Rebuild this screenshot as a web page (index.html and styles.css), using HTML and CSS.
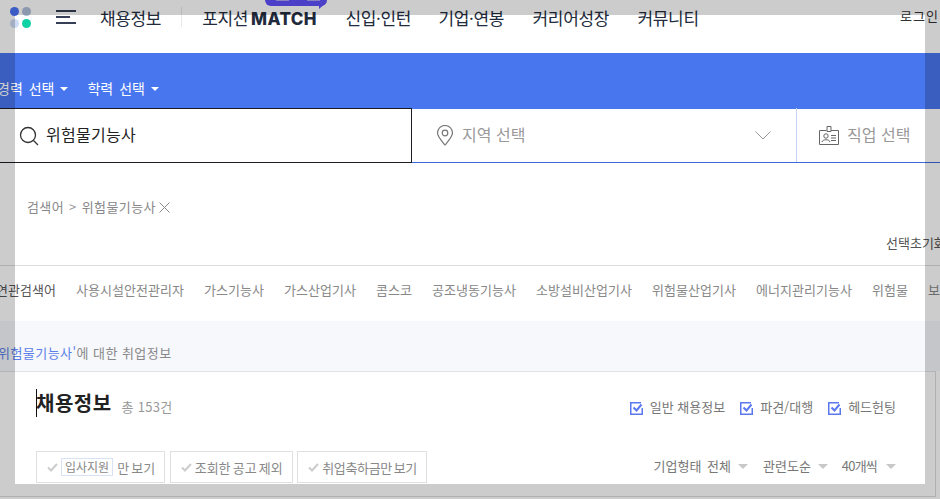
FILE: index.html
```html
<!DOCTYPE html>
<html lang="ko">
<head>
<meta charset="utf-8">
<title>채용정보</title>
<link rel="stylesheet" href="styles.css">
</head>
<body>
<div class="page">
  <header class="top">
    <svg class="logo" width="22" height="22" viewBox="0 0 22 22"><circle cx="4.500" cy="4.500" r="4.500" fill="#4a73f5"/><circle cx="16.500" cy="4.500" r="4.500" fill="#aebeda"/><circle cx="4.500" cy="16.500" r="4.500" fill="#cedbf6"/><circle cx="16.500" cy="16.500" r="4.500" fill="#0ed1a5"/></svg>
    <svg class="burger" width="20" height="14" viewBox="0 0 20 14"><path d="M0 1h20M0 7h14M0 13h20" stroke="#363f56" stroke-width="2" fill="none"/></svg>
    <nav class="nav">
      <a class="nav-first">채용정보</a>
      <span class="nav-sep"></span>
      <a class="nav-match">포지션<b>MATCH</b><span class="bubble"></span></a>
      <a class="nav-intern">신입·인턴</a>
      <a>기업·연봉</a>
      <a>커리어성장</a>
      <a>커뮤니티</a>
    </nav>
    <a class="login">로그인</a>
  </header>

  <section class="filters">
    <span class="filter">경력 선택<i class="caret"></i></span>
    <span class="filter">학력 선택<i class="caret"></i></span>
  </section>

  <section class="search">
    <div class="search-key">
      <svg width="20" height="20" viewBox="0 0 20 20"><circle cx="9" cy="9" r="7.500" fill="none" stroke="#333" stroke-width="1.300"/><path d="M14.500 14.500l4.500 4.500" stroke="#333" stroke-width="1.300"/></svg>
      <span class="key-text">위험물기능사</span>
    </div>
    <div class="search-area">
      <svg width="18" height="21" viewBox="0 0 18 21"><path d="M9 20C5 15 1.500 11.500 1.500 8a7.500 7.500 0 0 1 15 0c0 3.500-3.500 7-7.500 12z" fill="none" stroke="#777" stroke-width="1.200"/><circle cx="9" cy="8" r="2.800" fill="none" stroke="#777" stroke-width="1.200"/></svg>
      <span class="ph">지역 선택</span>
      <svg class="chev" width="16" height="9" viewBox="0 0 16 9"><path d="M.5.500L8 8l7.500-7.500" fill="none" stroke="#999" stroke-width="1"/></svg>
    </div>
    <div class="search-job">
      <svg width="20" height="19" viewBox="0 0 20 19"><path d="M7.500 4.500H.5v14h19v-14h-7.500M8 .5h4v5H8z" fill="none" stroke="#666"/><circle cx="7" cy="10" r="2.200" fill="none" stroke="#666"/><path d="M3 16c.3-3 7.700-3 8 0M12 9.500h5M12 12h5M12 14.500h5" fill="none" stroke="#666"/></svg>
      <span class="ph">직업 선택</span>
    </div>
  </section>

  <section class="crumbs">
    <div class="crumb-line"><span>검색어</span><span class="gt">&gt;</span><span>위험물기능사</span>
      <svg width="11" height="11" viewBox="0 0 11 11"><path d="M.5.500l10 10M10.500.5l-10 10" stroke="#888" stroke-width="1" fill="none"/></svg>
    </div>
    <div class="reset">선택초기화</div>
  </section>

  <section class="related">
    <strong>연관검색어</strong>
    <a>사용시설안전관리자</a>
    <a>가스기능사</a>
    <a>가스산업기사</a>
    <a>콤스코</a>
    <a>공조냉동기능사</a>
    <a>소방설비산업기사</a>
    <a>위험물산업기사</a>
    <a>에너지관리기능사</a>
    <a>위험물</a>
    <a>보일러</a>
  </section>

  <section class="about"><span class="about-key">위험물기능사'</span>에 대한 취업정보</section>

  <section class="card">
    <div class="card-head">
      <h2><i class="cursor"></i>채용정보</h2>
      <span class="total">총 153건</span>
      <div class="checks">
        <label class="check"><svg class="box" width="14" height="13" viewBox="0 0 14 13"><path d="M11 .75H.75v11.500h11.500V6" fill="none" stroke="#5a78f0" stroke-width="1.500"/><path d="M3.500 5.500l3 3 5-6" fill="none" stroke="#5a78f0" stroke-width="2"/></svg>일반 채용정보</label>
        <label class="check"><svg class="box" width="14" height="13" viewBox="0 0 14 13"><path d="M11 .75H.75v11.500h11.500V6" fill="none" stroke="#5a78f0" stroke-width="1.500"/><path d="M3.500 5.500l3 3 5-6" fill="none" stroke="#5a78f0" stroke-width="2"/></svg>파견/대행</label>
        <label class="check"><svg class="box" width="14" height="13" viewBox="0 0 14 13"><path d="M11 .75H.75v11.500h11.500V6" fill="none" stroke="#5a78f0" stroke-width="1.500"/><path d="M3.500 5.500l3 3 5-6" fill="none" stroke="#5a78f0" stroke-width="2"/></svg>헤드헌팅</label>
      </div>
    </div>
    <div class="card-tools">
      <button class="tag"><svg class="tick" width="11" height="9" viewBox="0 0 11 9"><path d="M1 4.500l3 3 6-6.500" fill="none" stroke="#ccc" stroke-width="2"/></svg><em>입사지원</em>만 보기</button>
      <button class="tag"><svg class="tick" width="11" height="9" viewBox="0 0 11 9"><path d="M1 4.500l3 3 6-6.500" fill="none" stroke="#ccc" stroke-width="2"/></svg>조회한 공고 제외</button>
      <button class="tag tag-narrow"><svg class="tick" width="11" height="9" viewBox="0 0 11 9"><path d="M1 4.500l3 3 6-6.500" fill="none" stroke="#ccc" stroke-width="2"/></svg>취업축하금만 보기</button>
      <div class="sorts">
        <span class="sort">기업형태 전체<i class="caret grey"></i></span>
        <span class="sort">관련도순<i class="caret grey"></i></span>
        <span class="sort sort-count">40개씩<i class="caret grey"></i></span>
      </div>
    </div>
  </section>
</div>
<div class="spotlight"></div>
</body>
</html>
```
FILE: styles.css
```css
* { box-sizing: border-box; }
html, body { margin: 0; padding: 0; height: 100%; overflow: hidden; }
body { background: #fff; font-family: "Noto Sans CJK KR", "Noto Sans", sans-serif; color: #666; font-size: 13px; line-height: 1; }
a { color: inherit; text-decoration: none; }
.page { width: 940px; height: 499px; overflow: hidden; }

.top { display: flex; align-items: flex-start; height: 53px; padding: 7px 2px 0 10px; position: relative; }
.logo { flex: none; }
.burger { flex: none; margin: 3px 0 0 24px; }
.nav { display: flex; align-items: flex-start; margin: 2px 0 0 24px; font-size: 17px; color: #222b3c; line-height: 18px; letter-spacing: -.35px; }
.nav a { margin-right: 28.500px; white-space: nowrap; }
.nav .nav-first { margin-right: 20px; }
.nav .nav-intern { margin-right: 27.500px; }
.nav-sep { width: 1px; height: 20px; background: #e8e8e8; margin: -2px 20px 0 0; }
.nav-match { position: relative; }
.nav-match b { font-family: Inter, "Liberation Sans", sans-serif; font-size: 17px; font-weight: 800; margin-left: 3px; letter-spacing: .4px; color: #222b3c; }
.bubble { position: absolute; left: 63px; top: -9px; width: 62px; height: 5.500px; background: #5f4ffa; border-radius: 0 0 7px 7px; }
.bubble::before { content: ""; position: absolute; left: 11px; top: 0; width: 13px; height: 1px; background: #a9a2f5; box-shadow: 31px 0 0 0 #a9a2f5; }
.bubble::after { content: ""; position: absolute; right: 0; top: 2px; border-top: 7px solid #5f4ffa; border-right: 8px solid transparent; }
.login { margin-left: auto; margin-top: 2px; font-size: 13px; color: #333; letter-spacing: 1px; margin-right: -1px; }

.filters { display: flex; height: 56px; background: #4876ef; padding: 27px 0 0 0; color: #fff; font-size: 14px; gap: 19px; word-spacing: 2px; }
.filter { display: inline-flex; align-items: flex-start; white-space: nowrap; line-height: 16px; }
.filter:first-child { margin-left: -3px; }
.caret { width: 0; height: 0; border: 4px solid transparent; border-top-color: #fff; border-bottom: 0; margin: 7px 0 0 6px; }
.caret.grey { border-width: 5px 5px 0; border-top-color: #c8c8c8; border-left-color: transparent; border-right-color: transparent; margin: 6px 0 0 7px; }

.search { display: flex; height: 55px; margin-top: -1px; border-bottom: 1px solid #3c68dc; position: relative; }
.search-key { width: 412px; height: 55px; flex: none; background: #fff; border: 1px solid #1c1c24; border-left: 0; display: flex; align-items: center; padding-left: 19px; gap: 7px; font-size: 16px; color: #222; }
.key-text { letter-spacing: .3px; margin-bottom: 3px; }
.search-area { width: 385px; flex: none; display: flex; align-items: center; padding: 0 25px 0 24px; border-right: 1px solid #c5d3f7; gap: 8px; }
.search-area .chev { margin-left: auto; }
.search-job { flex: 1; display: flex; align-items: center; padding-left: 22px; gap: 8px; white-space: nowrap; }
.ph { font-size: 16px; color: #999; margin-bottom: 3px; }

.crumbs { height: 102px; padding: 36px 0 0 27px; }
.crumb-line { display: flex; align-items: center; color: #888; line-height: 16px; gap: 5px; letter-spacing: .4px; }
.gt { color: #999; }
.crumb-line svg { margin-left: -2px; }
.reset { margin-top: 20px; padding-left: 859px; white-space: nowrap; color: #555; line-height: 16px; }

.related { height: 56px; border-top: 1px solid #ddd; display: flex; align-items: flex-start; padding: 15px 0 0 0; gap: 20px; white-space: nowrap; line-height: 17px; color: #888; letter-spacing: .04px; }
.related strong { font-weight: 400; color: #555; margin-left: -4px; }

.about { height: 50px; background: #f7f8fc; padding: 23px 0 0 0; color: #888; line-height: 17px; white-space: nowrap; letter-spacing: .45px; }
.about-key { color: #5b7fe8; margin-left: -2px; }

.card { height: 126px; width: 936px; border-top: 1px solid #e0e3e8; border-right: 1px solid #ddd; border-bottom: 1px solid #ddd; padding: 0 39px 0 36px; }
.card-head { display: flex; align-items: flex-start; height: 79px; padding-top: 17px; }
h2 { margin: 0; font-size: 20px; font-weight: 700; line-height: 28px; color: #222; position: relative; letter-spacing: .5px; }
.cursor { position: absolute; left: 0; top: 0; width: 1px; height: 28px; background: #111; }
.total { margin: 10px 0 0 10px; line-height: 16px; color: #999; letter-spacing: .3px; }
.checks { margin-left: auto; display: flex; gap: 15px; padding-top: 10px; }
.check { display: flex; align-items: flex-start; gap: 6px; color: #777; line-height: 15px; white-space: nowrap; }
.box { margin-top: 3px; }
.card-tools { display: flex; align-items: flex-start; }
.tag { display: flex; align-items: center; height: 32px; margin: 0 4.500px 0 0; padding: 0 9px 0 10px; background: #fff; border: 1px solid #e0e0e0; font: inherit; color: #888; gap: 3px; white-space: nowrap; word-spacing: -1.500px; }
.tag-narrow { letter-spacing: -.35px; }
.tag em { font-style: normal; font-size: 12px; border: 1px solid #d9e2f5; padding: 2px 3px; margin-right: 1px; }
.sorts { margin-left: auto; display: flex; gap: 15px; padding-top: 7px; }
.sort { display: flex; align-items: flex-start; line-height: 16px; color: #777; white-space: nowrap; word-spacing: 2px; }
.sort-count { letter-spacing: -.8px; margin-left: -1px; }
.sort-count .caret.grey { margin-left: 9px; }

.spotlight { position: absolute; left: 15px; top: 15px; width: 910px; height: 469px; box-shadow: 0 0 0 1000px rgba(0,0,0,.2); pointer-events: none; }
```
